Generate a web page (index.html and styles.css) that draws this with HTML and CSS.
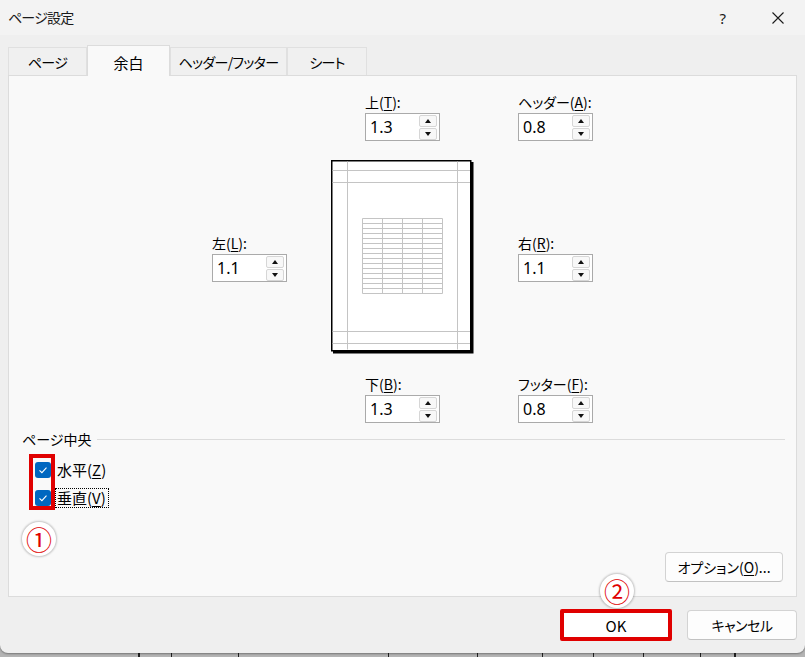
FILE: index.html
```html
<!DOCTYPE html>
<html lang="ja">
<head>
<meta charset="utf-8">
<title>ページ設定</title>
<link rel="stylesheet" href="styles.css">
</head>
<body>
<div class="dialog">
  <header class="titlebar">
    <span class="title">ページ設定</span>
    <div class="tb-buttons">
      <span class="help">?</span>
      <svg class="close" width="12" height="12" viewBox="0 0 12 12"><path d="M0.5 0.5L11.5 11.5M11.5 0.5L0.5 11.5" stroke="#1a1a1a" stroke-width="1.1" fill="none"/></svg>
    </div>
  </header>
  <div class="body-area">
    <nav class="tabs">
      <div class="tab t1">ページ</div>
      <div class="tab active">余白</div>
      <div class="tab t3">ヘッダー/フッター</div>
      <div class="tab t4">シート</div>
    </nav>
    <section class="panel">
      <div class="margins">
        <div class="spin pos-top">
          <label>上(<u>T</u>):</label>
          <div class="spin-box"><span class="val">1.3</span><span class="arrows"><span class="arr up"></span><span class="arr down"></span></span></div>
        </div>
        <div class="spin pos-header">
          <label>ヘッダー(<u>A</u>):</label>
          <div class="spin-box"><span class="val">0.8</span><span class="arrows"><span class="arr up"></span><span class="arr down"></span></span></div>
        </div>
        <div class="spin pos-left">
          <label>左(<u>L</u>):</label>
          <div class="spin-box"><span class="val">1.1</span><span class="arrows"><span class="arr up"></span><span class="arr down"></span></span></div>
        </div>
        <svg class="preview" width="143" height="195" viewBox="0 0 143 195">
          <rect x="2" y="2" width="140.5" height="191.5" fill="#000"/>
          <rect x="0.75" y="0.75" width="139" height="190" fill="#fff" stroke="#000" stroke-width="1.5"/>
          <path d="M16.5 1.5V189.5M126.5 1.5V189.5M1.5 10.5H139M1.5 22.5H139M1.5 171.5H139M1.5 183.5H139" stroke="#c4c4c4" stroke-width="1" fill="none"/>
          <path d="M31.5 58.5V133.5M51.5 58.5V133.5M71.5 58.5V133.5M91.5 58.5V133.5M111.5 58.5V133.5M31.5 58.5H111.5M31.5 63.5H111.5M31.5 68.5H111.5M31.5 73.5H111.5M31.5 78.5H111.5M31.5 83.5H111.5M31.5 88.5H111.5M31.5 93.5H111.5M31.5 98.5H111.5M31.5 103.5H111.5M31.5 108.5H111.5M31.5 113.5H111.5M31.5 118.5H111.5M31.5 123.5H111.5M31.5 128.5H111.5M31.5 133.5H111.5" stroke="#c4c4c4" stroke-width="1" fill="none"/>
        </svg>
        <div class="spin pos-right">
          <label>右(<u>R</u>):</label>
          <div class="spin-box"><span class="val">1.1</span><span class="arrows"><span class="arr up"></span><span class="arr down"></span></span></div>
        </div>
        <div class="spin pos-bottom">
          <label>下(<u>B</u>):</label>
          <div class="spin-box"><span class="val">1.3</span><span class="arrows"><span class="arr up"></span><span class="arr down"></span></span></div>
        </div>
        <div class="spin pos-footer">
          <label>フッター(<u>F</u>):</label>
          <div class="spin-box"><span class="val">0.8</span><span class="arrows"><span class="arr up"></span><span class="arr down"></span></span></div>
        </div>
      </div>

      <div class="group-title"><span>ページ中央</span><span class="rule"></span></div>
      <div class="checks">
        <div class="check">
          <span class="cbox"><svg width="16" height="16" viewBox="0 0 16 16"><path d="M4.5 8.3L6.9 10.6L11.5 5.6" stroke="#fff" stroke-width="1.1" fill="none"/></svg></span>
          <span class="clabel">水平(<u>Z</u>)</span>
        </div>
        <div class="check">
          <span class="cbox"><svg width="16" height="16" viewBox="0 0 16 16"><path d="M4.5 8.3L6.9 10.6L11.5 5.6" stroke="#fff" stroke-width="1.1" fill="none"/></svg></span>
          <span class="clabel focus">垂直(<u>V</u>)</span>
        </div>
        <div class="mark-box"></div>
        <div class="badge badge-1">①</div>
      </div>

      <div class="panel-foot">
        <button class="btn options">オプション(<u>O</u>)...</button>
      </div>
    </section>
    <footer class="actions">
      <div class="badge badge-2">②</div>
      <button class="btn ok">OK</button>
      <button class="btn cancel">キャンセル</button>
    </footer>
  </div>
</div>
<div class="sheet-strip">
  <span></span><span></span><span></span><span></span><span></span><span></span><span></span><span></span><span></span><span></span><span></span>
</div>
</body>
</html>
```
FILE: styles.css
```css
* { box-sizing: border-box; }
html, body { margin: 0; padding: 0; }
body {
  width: 805px;
  height: 657px;
  overflow: hidden;
  background: #b4b4b4;
  font-family: "Noto Sans CJK JP", "Noto Sans", sans-serif;
  font-feature-settings: "palt";
  font-size: 14px;
  color: #000;
}
u { text-decoration: underline; text-underline-offset: 2px; text-decoration-thickness: 1px; }

.dialog {
  width: 805px;
  height: 653px;
  background: #efefef;
  border-radius: 0 0 8px 8px;
  box-shadow: 0 1px 2px rgba(0,0,0,0.35);
  display: flex;
  flex-direction: column;
  position: relative;
  z-index: 1;
}

.titlebar {
  height: 35px;
  background: #f3f3f3;
  display: flex;
  align-items: center;
  padding-left: 8px;
}
.title { font-size: 14px; line-height: 20px; color: #1a1a1a; letter-spacing: -0.8px; margin-top: -1px; }
.tb-buttons {
  margin-left: auto;
  display: flex;
  align-items: center;
  gap: 46px;
  padding-right: 21px;
}
.help {
  font-family: "Noto Sans", sans-serif;
  font-size: 15px;
  line-height: 20px;
  color: #1a1a1a;
}
.close { display: block; }

.body-area {
  flex: 1;
  display: flex;
  flex-direction: column;
  padding: 10px 8px 0;
}

.tabs {
  display: flex;
  align-items: flex-end;
  height: 30px;
}
.tab {
  height: 28px;
  display: flex;
  align-items: center;
  justify-content: center;
  border: 1px solid #e0e0e0;
  border-bottom: none;
  background: #f0f0f0;
  font-size: 14px;
  letter-spacing: -0.7px;
  padding-top: 0;
}
.t1 { width: 79px; }
.t3 { width: 117px; }
.t4 { width: 80px; }
.tab.active {
  width: 83px;
  height: 31px;
  margin-bottom: -1px;
  background: #f9f9f9;
  border-color: #dcdcdc;
  position: relative;
  z-index: 1;
  padding-top: 2px;
  font-size: 15px;
  letter-spacing: 0;
}

.panel {
  height: 522px;
  background: #f9f9f9;
  border: 1px solid #dcdcdc;
  display: flex;
  flex-direction: column;
  position: relative;
}

.margins {
  display: grid;
  grid-template-columns: 75px 143px 75px;
  column-gap: 44px;
  row-gap: 19px;
  margin: 16px 0 0 203px;
}
.spin { display: flex; flex-direction: column; gap: 1px; }
.spin label { line-height: 20px; font-size: 14px; white-space: nowrap; }
.spin-box {
  width: 75px;
  height: 28px;
  border: 1px solid #aaaaaa;
  background: #fff;
  display: flex;
  align-items: center;
  padding: 1px 1px 1px 4px;
}
.val {
  flex: 1;
  font-family: "Noto Sans", sans-serif;
  font-size: 16px;
  line-height: 20px;
}
.arrows {
  display: flex;
  flex-direction: column;
  gap: 1px;
  margin-right: 1px;
}
.arr {
  width: 18px;
  height: 12px;
  background: #f8f8f8;
  border: 1px solid #d6d6d6;
  border-radius: 2px;
  display: flex;
  align-items: center;
  justify-content: center;
}
.arr::before {
  content: "";
  border-left: 3.5px solid transparent;
  border-right: 3.5px solid transparent;
}
.up::before { border-bottom: 4px solid #111; }
.down::before { border-top: 4px solid #111; }

.pos-top { grid-column: 2; grid-row: 1; justify-self: center; }
.pos-header { grid-column: 3; grid-row: 1; }
.pos-left { grid-column: 1; grid-row: 2; align-self: center; }
.preview { grid-column: 2; grid-row: 2; display: block; }
.pos-right { grid-column: 3; grid-row: 2; align-self: center; }
.pos-bottom { grid-column: 2; grid-row: 3; justify-self: center; }
.pos-footer { grid-column: 3; grid-row: 3; }

.group-title {
  display: flex;
  align-items: center;
  gap: 6px;
  margin-top: 6px;
  padding: 0 11px 0 13px;
  line-height: 20px;
}
.rule { flex: 1; height: 1px; background: #dcdcdc; }

.checks {
  position: relative;
  margin-top: 11px;
  padding-left: 26px;
  display: flex;
  flex-direction: column;
  gap: 8px;
}
.check {
  display: flex;
  align-items: center;
  gap: 4px;
  height: 20px;
}
.cbox {
  width: 16px;
  height: 16px;
  border-radius: 3px;
  background: #0067c0;
  display: block;
}
.cbox svg { display: block; }
.clabel {
  padding: 0 2px 0 1px;
  font-size: 15px;
  line-height: 18px;
  border: 1px solid transparent;
}
.clabel.focus { border: 1px dotted #000; }

.mark-box {
  position: absolute;
  left: 20px;
  top: -6px;
  width: 26px;
  height: 56px;
  border: 4px solid #e00000;
}

.badge {
  position: absolute;
  width: 34px;
  height: 34px;
  border-radius: 50%;
  background: #fff;
  box-shadow: 0 0 2px 1px rgba(0,0,0,0.22);
  display: flex;
  align-items: center;
  justify-content: center;
  color: #e00000;
  font-size: 26px;
  line-height: 1;
  z-index: 2;
}
.badge-1 { left: 13px; top: 62px; }
.badge-2 { left: 592px; top: -23px; }

.panel-foot {
  margin-top: auto;
  display: flex;
  justify-content: flex-end;
  padding: 0 13px 14px 0;
}
.btn {
  font-family: "Noto Sans CJK JP", "Noto Sans", sans-serif;
  font-feature-settings: "palt";
  font-size: 14px;
  color: #000;
  background: #fdfdfd;
  border: 1px solid #d3d3d3;
  border-bottom-color: #c2c2c2;
  border-radius: 4px;
  padding: 0;
}
.options { width: 118px; height: 30px; }

.actions {
  position: relative;
  display: flex;
  justify-content: flex-end;
  align-items: center;
  gap: 15px;
  height: 55px;
  padding: 12px 0 11px;
}
.ok {
  width: 112px;
  height: 32px;
  background: #fff;
  border: 4px solid #e00000;
  border-radius: 2px;
  font-size: 15px;
}
.cancel { width: 110px; height: 30px; letter-spacing: -0.5px; }

.sheet-strip {
  height: 4px;
  display: grid;
  grid-template-columns: 140px 32px 67px 150px 89px 65px 51px 50px 57px 35px 1fr;
}
.sheet-strip span { border-right: 1px solid #222; }
.sheet-strip span:first-child,
.sheet-strip span:nth-child(10) { border-right-width: 2px; }
.sheet-strip span:last-child { border-right: none; }
```
